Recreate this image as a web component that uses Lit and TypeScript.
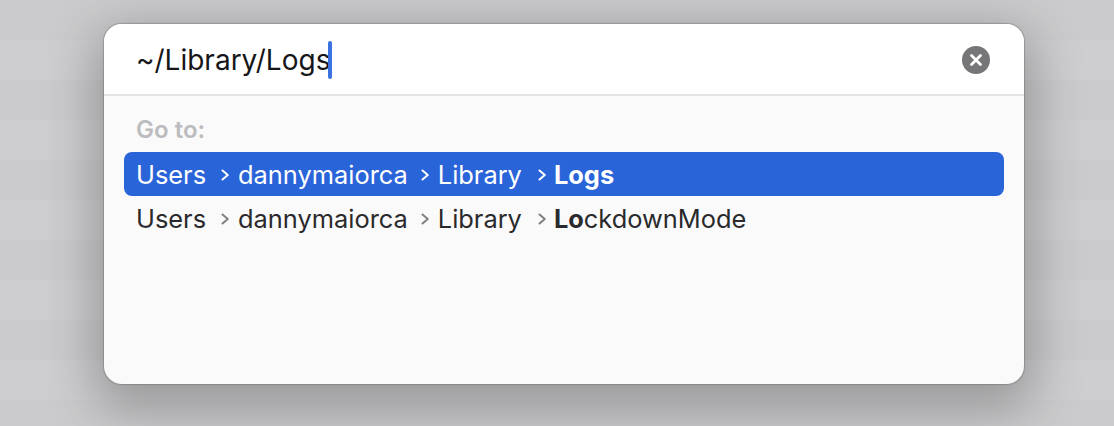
import { LitElement, html, css } from "lit";
import { customElement } from "lit/decorators.js";

const chevron = html`<svg class="chev" width="10" height="14" viewBox="0 0 10 14"><path d="M2.5 2.5 L7.8 7 L2.5 11.5" fill="none" stroke="currentColor" stroke-width="2" stroke-linecap="round" stroke-linejoin="round"/></svg>`;

@customElement("app-root")
export class AppRoot extends LitElement {
  static styles = css`
    :host { display: block; width: 1114px; height: 426px; overflow: hidden; font-family: Inter, "Liberation Sans", sans-serif; }
    .page {
      height: 426px; box-sizing: border-box; padding: 24px 90px 42px 104px;
      background:
        repeating-linear-gradient(180deg, rgba(255,255,255,0) 0 40px, rgba(255,255,255,.05) 40px 80px),
        #cbcbcd;
    }
    .dialog {
      width: 920px; height: 360px; border-radius: 18px; overflow: hidden;
      background: #fafafb; display: flex; flex-direction: column;
      box-shadow: 0 0 1px .5px rgba(90,90,90,.35), 0 16px 50px 10px rgba(0,0,0,.26);
    }
    .search {
      height: 72px; flex: none; box-sizing: border-box; background: #fff;
      border-bottom: 2px solid #e5e5e6; display: flex; align-items: center;
      padding: 2px 34px 0 32px; justify-content: space-between;
    }
    .field { display: flex; align-items: center; font-size: 28px; color: #161618; }
    .caret { width: 4px; height: 38px; background: #3a73e0; border-radius: 2px; margin-left: -2px; }
    .clear { display: block; }
    .body { padding: 22px 20px 0; display: flex; flex-direction: column; }
    .goto { padding-left: 12px; font-size: 24px; font-weight: 600; color: #bcbcbe; line-height: 24px; margin-bottom: 10px; }
    .row {
      height: 44px; border-radius: 8px; padding-left: 12px; display: flex; align-items: center;
      font-size: 25.4px; color: #2a2a2c; padding-top: 1px; box-sizing: border-box;
    }
    .row.sel { background: #2a64d9; color: #fff; }
    .row b { font-weight: 700; }
    .row .chev { color: #808082; margin: 0 8px 0 14px; flex: none; }
    .row .chev:nth-of-type(2) { margin-left: 12px; }
    .row .chev:nth-of-type(3) { margin: 0 7px 0 15px; }
    .row.sel .chev { color: #fff; }
  `;

  private row(parts: string[], bold: string, rest: string, sel: boolean) {
    return html`<div class="row ${sel ? "sel" : ""}">
      ${parts.map((p) => html`<span>${p}</span>${chevron}`)}
      <span><b>${bold}</b>${rest}</span>
    </div>`;
  }

  render() {
    const parts = ["Users", "dannymaiorca", "Library"];
    return html`<div class="page">
      <div class="dialog">
        <div class="search">
          <div class="field"><span>~/Library/Logs</span><span class="caret"></span></div>
          <svg class="clear" width="28" height="28" viewBox="0 0 28 28">
            <circle cx="14" cy="14" r="14" fill="#767678"/>
            <path d="M9.5 9.5 L18.5 18.5 M18.5 9.5 L9.5 18.5" stroke="#fff" stroke-width="2.8" stroke-linecap="round"/>
          </svg>
        </div>
        <div class="body">
          <div class="goto">Go to:</div>
          ${this.row(parts, "Logs", "", true)}
          ${this.row(parts, "Lo", "ckdownMode", false)}
        </div>
      </div>
    </div>`;
  }
}
